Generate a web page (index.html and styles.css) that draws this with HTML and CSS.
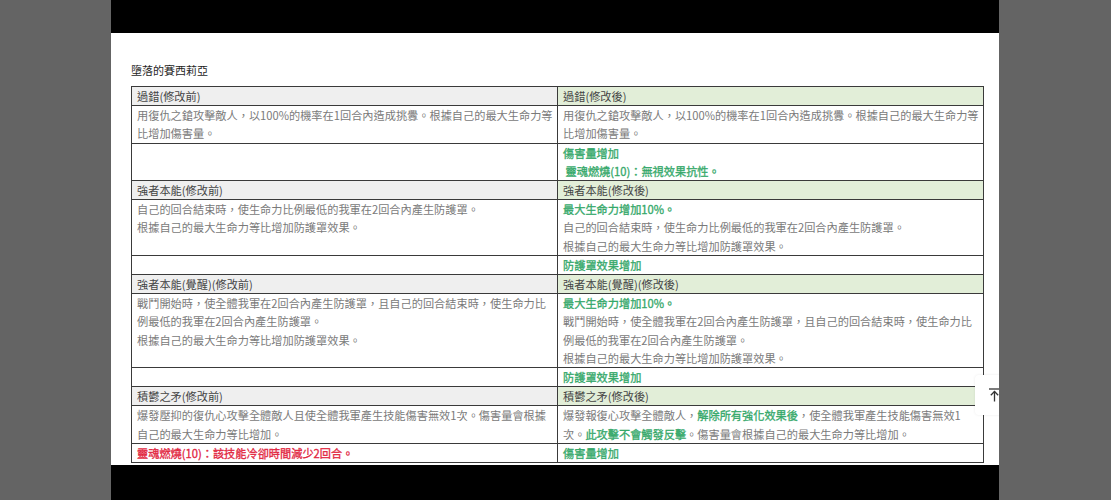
FILE: index.html
```html
<!DOCTYPE html>
<html lang="zh-Hant">
<head>
<meta charset="utf-8">
<title>墮落的賽西莉亞</title>
<link rel="stylesheet" href="styles.css">
</head>
<body>
<div class="phone">
  <div class="bar"></div>
  <main class="page">
    <h1 class="title">墮落的賽西莉亞</h1>
    <table class="cmp">
      <colgroup><col><col></colgroup>
      <tr class="head"><td class="before">過錯(修改前)</td><td class="after">過錯(修改後)</td></tr>
      <tr>
        <td>用復仇之鎗攻擊敵人，以100%的機率在1回合內造成挑釁。根據自己的最大生命力等<br>比增加傷害量。</td>
        <td>用復仇之鎗攻擊敵人，以100%的機率在1回合內造成挑釁。根據自己的最大生命力等<br>比增加傷害量。</td>
      </tr>
      <tr>
        <td></td>
        <td><span class="g">傷害量增加</span><br><span class="g">&nbsp;靈魂燃燒(10)：無視效果抗性。</span></td>
      </tr>
      <tr class="head"><td class="before">強者本能(修改前)</td><td class="after">強者本能(修改後)</td></tr>
      <tr>
        <td>自己的回合結束時，使生命力比例最低的我軍在2回合內產生防護罩。<br>根據自己的最大生命力等比增加防護罩效果。</td>
        <td><span class="g">最大生命力增加10%。</span><br>自己的回合結束時，使生命力比例最低的我軍在2回合內產生防護罩。<br>根據自己的最大生命力等比增加防護罩效果。</td>
      </tr>
      <tr>
        <td></td>
        <td><span class="g">防護罩效果增加</span></td>
      </tr>
      <tr class="head"><td class="before">強者本能(覺醒)(修改前)</td><td class="after">強者本能(覺醒)(修改後)</td></tr>
      <tr>
        <td>戰鬥開始時，使全體我軍在2回合內產生防護罩，且自己的回合結束時，使生命力比<br>例最低的我軍在2回合內產生防護罩。<br>根據自己的最大生命力等比增加防護罩效果。</td>
        <td><span class="g">最大生命力增加10%。</span><br>戰鬥開始時，使全體我軍在2回合內產生防護罩，且自己的回合結束時，使生命力比<br>例最低的我軍在2回合內產生防護罩。<br>根據自己的最大生命力等比增加防護罩效果。</td>
      </tr>
      <tr>
        <td></td>
        <td><span class="g">防護罩效果增加</span></td>
      </tr>
      <tr class="head"><td class="before">積鬱之矛(修改前)</td><td class="after">積鬱之矛(修改後)</td></tr>
      <tr>
        <td>爆發壓抑的復仇心攻擊全體敵人且使全體我軍產生技能傷害無效1次。傷害量會根據<br>自己的最大生命力等比增加。</td>
        <td>爆發報復心攻擊全體敵人，<span class="g">解除所有強化效果後</span>，使全體我軍產生技能傷害無效1<br>次。<span class="g">此攻擊不會觸發反擊</span>。傷害量會根據自己的最大生命力等比增加。</td>
      </tr>
      <tr>
        <td><span class="r">靈魂燃燒(10)：該技能冷卻時間減少2回合。</span></td>
        <td><span class="g">傷害量增加</span></td>
      </tr>
    </table>
    <button class="totop" type="button" aria-label="回到頂部">
      <svg width="11" height="14" viewBox="0 0 11 14" fill="none" stroke="#333" stroke-width="1.3">
        <path d="M0 1H11"/>
        <path d="M5.5 3.5V13.5"/>
        <path d="M1.8 7.2L5.5 3.5L9.2 7.2"/>
      </svg>
    </button>
  </main>
  <div class="bar bottom"></div>
</div>
</body>
</html>
```
FILE: styles.css
```css
html, body {
  margin: 0;
  padding: 0;
}

body {
  height: 500px;
  overflow: hidden;
  background: #646464;
  display: grid;
  grid-template-columns: 111px 888px 1fr;
  font-family: "Noto Sans CJK TC", "Noto Sans", sans-serif;
}

.phone {
  grid-column: 2;
  display: flex;
  flex-direction: column;
  height: 500px;
}

.bar {
  flex: none;
  height: 33px;
  background: #000;
}

.bar.bottom {
  height: 35px;
}

.page {
  flex: 1;
  min-height: 0;
  position: relative;
  overflow: hidden;
  background: #fff;
  padding: 28px 15px 0 20px;
}

.title {
  margin: 0 0 7px;
  font-size: 11px;
  line-height: 18px;
  font-weight: normal;
  color: #1e1e1e;
}

.cmp {
  border-collapse: collapse;
  table-layout: fixed;
  width: 853px;
  font-size: 11.2px;
  line-height: 18.2px;
  color: #7a7a7a;
}

.cmp col {
  width: 50%;
}

.cmp td {
  border: 1px solid #3a3a3a;
  padding: 0 5px;
  vertical-align: top;
  white-space: nowrap;
}

.head td {
  color: #444;
}

.head .before {
  background: #efefef;
}

.head .after {
  background: #e2eed8;
}

.g {
  color: #34a869;
  -webkit-text-stroke: 0.3px #34a869;
}

.r {
  color: #e2263f;
  -webkit-text-stroke: 0.3px #e2263f;
}

.totop {
  position: absolute;
  top: 342px;
  right: -14px;
  width: 38px;
  height: 40px;
  padding: 0;
  border: none;
  border-radius: 4px;
  background: #fff;
  box-shadow: 0 0 3px rgba(0, 0, 0, 0.08);
  display: flex;
  align-items: center;
  justify-content: center;
}
```
